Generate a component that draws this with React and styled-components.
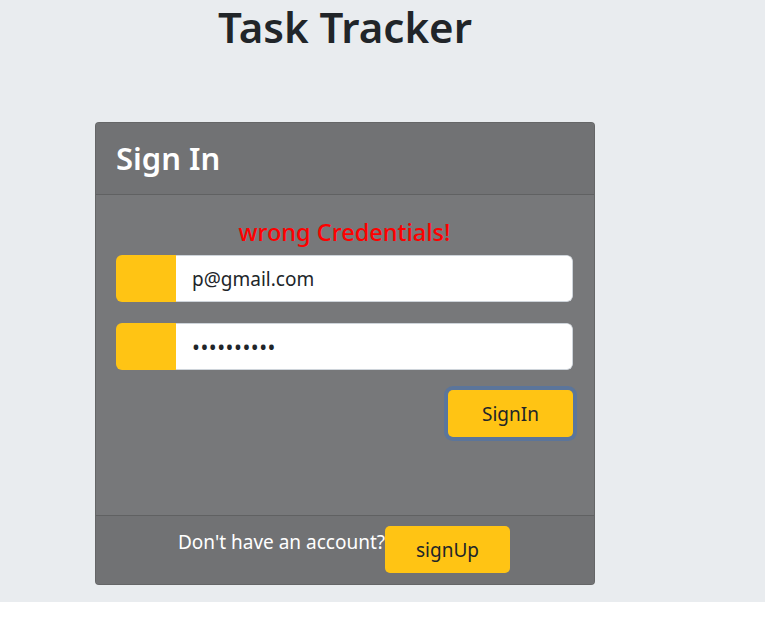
import React from "react";
import styled, { createGlobalStyle } from "styled-components";

const GlobalStyle = createGlobalStyle`
  body {
    margin: 0;
    background: #ffffff;
    font-family: "Noto Sans", "Open Sans", sans-serif;
    color: #212529;
  }
`;

export default function App() {
  return (
    <React.Fragment>
      <GlobalStyle />
      <Page>
        <Column>
          <Title>Task Tracker</Title>
          <Card>
            <CardHeader>Sign In</CardHeader>
            <CardBody>
              <ErrorText>wrong Credentials!</ErrorText>
              <InputGroup>
                <Prepend />
                <Field type="email" defaultValue="p@gmail.com" />
              </InputGroup>
              <InputGroup>
                <Prepend />
                <Field type="password" defaultValue="1234567890" secret />
              </InputGroup>
              <Actions>
                <YellowButton focused>SignIn</YellowButton>
              </Actions>
            </CardBody>
            <CardFooter>
              <FooterText>Don't have an account?</FooterText>
              <YellowButton>signUp</YellowButton>
            </CardFooter>
          </Card>
        </Column>
      </Page>
    </React.Fragment>
  );
}

const Page = styled.div`
  background: #e9ecef;
  height: 602px;
  width: 100%;
`;

const Column = styled.div`
  width: 690px;
  display: flex;
  flex-direction: column;
  align-items: center;
`;

const Title = styled.h1`
  margin: 0;
  font-size: 42px;
  line-height: 54px;
  font-weight: 600;
  color: #212529;
`;

const Card = styled.div`
  margin-top: 68px;
  width: 500px;
  box-sizing: border-box;
  background: #77787a;
  border: 1px solid rgba(0, 0, 0, 0.15);
  border-radius: 4px;
  overflow: hidden;
`;

const CardHeader = styled.div`
  background: #717274;
  color: #ffffff;
  font-size: 31px;
  font-weight: 600;
  line-height: 47px;
  padding: 12px 20px;
  border-bottom: 1px solid rgba(0, 0, 0, 0.15);
`;

const CardBody = styled.div`
  height: 320px;
  box-sizing: border-box;
  padding: 20px 21px 20px 20px;
  display: flex;
  flex-direction: column;
`;

const ErrorText = styled.p`
  margin: 0 0 6px;
  text-align: center;
  color: #ff0000;
  font-size: 23.5px;
  line-height: 34px;
  font-weight: 500;
`;

const InputGroup = styled.div`
  display: flex;
  height: 47px;
  margin-bottom: 21px;
  border-radius: 6px;
  overflow: hidden;
`;

const Prepend = styled.span`
  width: 60px;
  flex: none;
  background: #ffc414;
`;

const Field = styled.input`
  flex: 1;
  min-width: 0;
  border: 1px solid #ced4da;
  border-left: none;
  border-radius: 0 6px 6px 0;
  padding: 0 16px;
  font-family: inherit;
  font-size: ${(p) => (p.secret ? "21px" : "19px")};
  letter-spacing: ${(p) => (p.secret ? "0.5px" : "normal")};
  color: #212529;
  background: #ffffff;
  outline: none;
`;

const Actions = styled.div`
  display: flex;
  justify-content: flex-end;
  margin-top: -1px;
`;

const YellowButton = styled.button`
  width: 125px;
  height: 47px;
  border: none;
  border-radius: 5px;
  background: #ffc414;
  color: #212529;
  font-family: inherit;
  font-size: 19px;
  padding: 0;
  box-shadow: ${(p) => (p.focused ? "0 0 0 4px #5b759b" : "none")};
`;

const CardFooter = styled.div`
  height: 69px;
  box-sizing: border-box;
  padding: 10px 20px 10px 18px;
  background: #717274;
  border-top: 1px solid rgba(0, 0, 0, 0.15);
  display: flex;
  justify-content: center;
  align-items: flex-start;
`;

const FooterText = styled.span`
  color: #ffffff;
  font-size: 19px;
  line-height: 32px;
`;
